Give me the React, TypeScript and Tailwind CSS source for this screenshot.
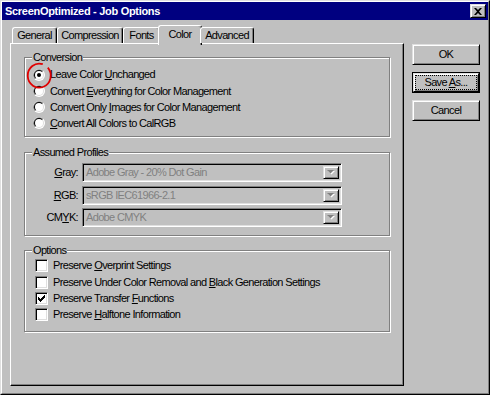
import type { ReactNode } from "react";

const raised =
	"border border-t-[#dfdfdf] border-l-[#dfdfdf] border-r-black border-b-black shadow-[inset_1px_1px_0_#fff,inset_-1px_-1px_0_#808080]";
const sunken =
	"border border-t-[#808080] border-l-[#808080] border-r-white border-b-white shadow-[inset_1px_1px_0_#000,inset_-1px_-1px_0_#dfdfdf]";

const CHECK = ["......x", ".....xx", "x...xxx", "xx.xxx.", "xxxxx..", ".xxx...", "..x...."];

const Radio = ({ checked }: { checked?: boolean }) => (
	<svg width="12" height="12" viewBox="0 0 12 12" className="shrink-0">
		<circle cx="6" cy="6" r="6" fill="#fff" />
		<path d="M1.76 10.24A6 6 0 0 1 10.24 1.76L6 6Z" fill="#808080" />
		<circle cx="6" cy="6" r="5" fill="#dfdfdf" />
		<path d="M2.46 9.54A5 5 0 0 1 9.54 2.46L6 6Z" fill="#000" />
		<circle cx="6" cy="6" r="4" fill="#fff" />
		{checked && <circle cx="6" cy="6" r="2" fill="#000" />}
	</svg>
);

const Checkbox = ({ checked }: { checked?: boolean }) => (
	<div className={`w-[13px] h-[13px] shrink-0 bg-white ${sunken}`}>
		{checked && (
			<svg width="7" height="7" viewBox="0 0 7 7" className="ml-[2px] mt-[2px]">
				{CHECK.flatMap((row, y) =>
					row.split("").map((c, x) =>
						c === "x" ? <rect key={`${x}-${y}`} x={x} y={y} width="1" height="1" fill="#000" /> : null,
					),
				)}
			</svg>
		)}
	</div>
);

const Group = ({ title, className, children }: { title: string; className: string; children: ReactNode }) => (
	<fieldset
		className={`w-[366px] border border-[#808080] shadow-[inset_1px_1px_0_#fff,1px_1px_0_#fff] ${className}`}
	>
		<legend className="ml-[7px] px-[1px] bg-[#c0c0c0] leading-[13px]">{title}</legend>
		{children}
	</fieldset>
);

const Combo = ({ value, className }: { value: string; className?: string }) => (
	<div className={`h-[19px] w-[260px] flex items-center p-[2px] ${sunken} ${className ?? ""}`}>
		<span className="flex-1 pl-[1px] text-[#808080] leading-none">{value}</span>
		<div className={`w-[16px] h-full flex items-center justify-center ${raised}`}>
			<svg width="8" height="5" viewBox="0 0 8 5">
				<path d="M1 1h7L4.5 4.5Z" fill="#fff" />
				<path d="M0 0h7L3.5 3.5Z" fill="#808080" />
			</svg>
		</div>
	</div>
);

const Button = ({ children, isDefault }: { children: ReactNode; isDefault?: boolean }) =>
	isDefault ? (
		<div className="h-[21px] border border-black">
			<div className={`h-full flex items-center justify-center p-[1px] ${raised}`}>
				<div className="h-full w-full flex items-center justify-center border border-dotted border-black">
					{children}
				</div>
			</div>
		</div>
	) : (
		<div className={`h-[21px] flex items-center justify-center ${raised}`}>{children}</div>
	);

const tabs = [
	{ label: "General", w: "w-[45px]" },
	{ label: "Compression", w: "w-[66px]" },
	{ label: "Fonts", w: "w-[37px]" },
	{ label: "Color", w: "w-[44px]", active: true },
	{ label: "Advanced", w: "w-[54px]" },
];

export default function App() {
	return (
		<div className="w-[490px] h-[395px] bg-[#c0c0c0] border border-t-[#dfdfdf] border-l-[#dfdfdf] border-r-black border-b-black font-['Liberation_Sans',Arial,sans-serif] text-[11px] text-black tracking-[-0.65px]">
			<div className="h-full flex flex-col border border-t-white border-l-white border-r-[#808080] border-b-[#808080]">
				{/* title bar */}
				<div className="h-[18px] bg-[#000080] flex items-center pl-[3px] pr-[2px]">
					<span className="flex-1 text-white font-bold tracking-[-0.3px]">ScreenOptimized - Job Options</span>
					<div className={`w-[16px] h-[14px] flex items-center justify-center bg-[#c0c0c0] ${raised}`}>
						<svg width="8" height="7" viewBox="0 0 8 7">
							<path d="M0 0h2l2 2 2-2h2L5 3.5 8 7H6L4 5 2 7H0l3-3.5Z" fill="#000" />
						</svg>
					</div>
				</div>

				<div className="flex pl-[8px]">
					<div className="w-[394px] flex flex-col">
						{/* tabs */}
						<div className="h-[18px] mt-[5px] pl-[2px] flex items-end relative z-10">
							{tabs.map((t) => (
								<div
									key={t.label}
									className={`${t.w} flex items-center justify-center rounded-t-[3px] border-t border-l border-r border-t-white border-l-white border-r-black shadow-[inset_-1px_0_0_#808080] bg-[#c0c0c0] ${
										t.active ? "h-[20px] -mx-[2px] -mb-[2px] pb-[3px]" : "h-[16px]"
									}`}
								>
									{t.label}
								</div>
							))}
						</div>

						{/* panel */}
						<div className="h-[343px] pl-[13px] pt-[7px] border border-t-white border-l-white border-r-black border-b-black shadow-[inset_-1px_-1px_0_#808080]">
							<Group title="Conversion" className="pb-[5px]">
								<div className="flex flex-col mt-[2px] pl-[8px]">
									<div className="h-[17px] flex items-center gap-[5px]">
										<div className="relative">
											<Radio checked />
											<svg
												width="26"
												height="26"
												viewBox="0 0 26 26"
												className="absolute -left-[7px] -top-[7px] overflow-visible"
											>
												<path
													d="M16.8 2.2A11.5 12 0 1 0 21.8 5.6"
													fill="none"
													stroke="#e00000"
													strokeWidth="1.8"
												/>
											</svg>
										</div>
										<span>
											Leave Color <u>U</u>nchanged
										</span>
									</div>
									<div className="h-[16px] flex items-center gap-[5px]">
										<Radio />
										<span>
											Convert <u>E</u>verything for Color Management
										</span>
									</div>
									<div className="h-[16px] flex items-center gap-[5px]">
										<Radio />
										<span>
											Convert Only <u>I</u>mages for Color Management
										</span>
									</div>
									<div className="h-[16px] flex items-center gap-[5px]">
										<Radio />
										<span>
											<u>C</u>onvert All Colors to CalRGB
										</span>
									</div>
								</div>
							</Group>

							<Group title="Assumed Profiles" className="mt-[9px] pb-[8px]">
								<div className="flex flex-col mt-[4px]">
									<div className="flex items-center">
										<span className="w-[53px] text-right">
											<u>G</u>ray:
										</span>
										<Combo value="Adobe Gray - 20% Dot Gain" className="ml-[4px]" />
									</div>
									<div className="flex items-center mt-[4px]">
										<span className="w-[53px] text-right">
											<u>R</u>GB:
										</span>
										<Combo value="sRGB IEC61966-2.1" className="ml-[4px]" />
									</div>
									<div className="flex items-center mt-[3px]">
										<span className="w-[53px] text-right">
											CM<u>Y</u>K:
										</span>
										<Combo value="Adobe CMYK" className="ml-[4px]" />
									</div>
								</div>
							</Group>

							<Group title="Options" className="mt-[8px] pb-[9px]">
								<div className="flex flex-col pl-[10px]">
									<div className="h-[17px] flex items-center gap-[5px]">
										<Checkbox />
										<span>
											Preserve <u>O</u>verprint Settings
										</span>
									</div>
									<div className="h-[16px] flex items-center gap-[5px]">
										<Checkbox />
										<span>
											Preserve Under Color Removal and <u>B</u>lack Generation Settings
										</span>
									</div>
									<div className="h-[16px] flex items-center gap-[5px]">
										<Checkbox checked />
										<span>
											Preserve Transfer <u>F</u>unctions
										</span>
									</div>
									<div className="h-[16px] flex items-center gap-[5px]">
										<Checkbox />
										<span>
											Preserve <u>H</u>alftone Information
										</span>
									</div>
								</div>
							</Group>
						</div>
					</div>

					{/* buttons */}
					<div className="ml-[8px] mt-[24px] w-[68px] flex flex-col gap-[7px]">
						<Button>OK</Button>
						<Button isDefault>
							<span>
								Save <u>A</u>s...
							</span>
						</Button>
						<Button>Cancel</Button>
					</div>
				</div>
			</div>
		</div>
	);
}
